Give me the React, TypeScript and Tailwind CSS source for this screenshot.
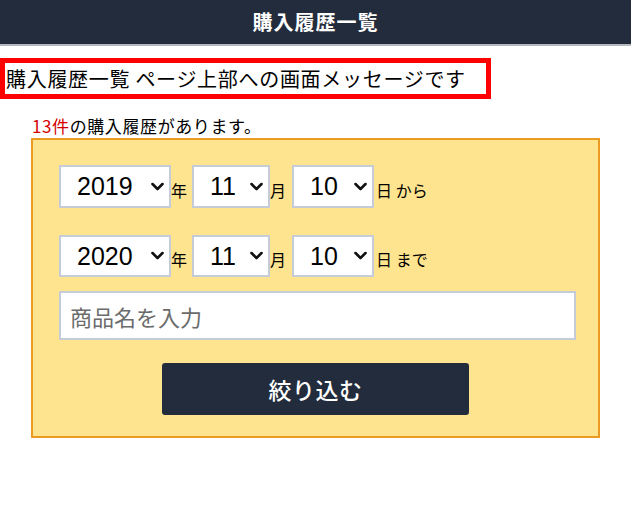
import React from "react";

const Chevron = () => (
  <svg
    className="pointer-events-none absolute right-[7px] top-1/2 -translate-y-1/2"
    width="13"
    height="9"
    viewBox="0 0 13 9"
  >
    <path d="M1.5 1.5 L6.5 6.5 L11.5 1.5" fill="none" stroke="#111" strokeWidth="2.6" strokeLinecap="round" strokeLinejoin="round" />
  </svg>
);

function Sel({ value, w, h }: { value: string; w: string; h: string }) {
  return (
    <div className={`relative ${w}`}>
      <select
        defaultValue={value}
        className={`w-full ${h} appearance-none rounded-none border-2 border-[#c6ccd7] bg-white pl-[16px] text-[25px] leading-none text-black outline-none`}
        style={{ fontFamily: "'Liberation Sans', 'Noto Sans CJK JP', sans-serif" }}
      >
        <option value={value}>{value}</option>
      </select>
      <Chevron />
    </div>
  );
}

function Row({ y, suffix, h }: { y: string; suffix: string; h: string }) {
  return (
    <div className="flex items-end">
      <Sel value={y} w="w-[112px]" h={h} />
      <span className="mb-[10px] text-[16px] leading-none">年</span>
      <div className="ml-[5px]">
        <Sel value="11" w="w-[78px]" h={h} />
      </div>
      <span className="mb-[10px] text-[16px] leading-none">月</span>
      <div className="ml-[6px]">
        <Sel value="10" w="w-[82px]" h={h} />
      </div>
      <span className="mb-[10px] ml-[2px] text-[16px] leading-none">日 {suffix}</span>
    </div>
  );
}

export default function App() {
  return (
    <div
      className="min-h-[515px] w-[631px] bg-white text-black"
      style={{ fontFamily: "'Noto Sans CJK JP', 'Noto Sans', sans-serif" }}
    >
      <header className="flex h-[46px] items-center justify-center border-b-2 border-[#b4b8bd] bg-[#222c3d]">
        <h1 className="text-[20px] font-bold tracking-[1px] text-white">購入履歴一覧</h1>
      </header>

      <div className="mt-[12px] flex h-[41px] w-[491px] items-center border-[5px] border-[#ff0000] pl-[1px] text-[20px] leading-none tracking-[0.7px]">
        購入履歴一覧 ページ上部への画面メッセージです
      </div>

      <p className="ml-[32px] mt-[15px] h-[24px] text-[17px] leading-[24px] tracking-[0.6px]">
        <span className="text-[#d40000]">13件</span>の購入履歴があります。
      </p>

      <div className="ml-[31px] w-[569px] border-2 border-[#ec9a22] bg-[#fee48f] pb-[21px] pl-[26px] pr-[22px] pt-[25px]">
        <Row y="2019" suffix="から" h="h-[43px]" />
        <div className="mt-[27px]">
          <Row y="2020" suffix="まで" h="h-[42px]" />
        </div>
        <input
          placeholder="商品名を入力"
          className="mt-[14px] h-[49px] w-[517px] border-2 border-[#c6ccd7] bg-white pl-[9px] pr-[10px] text-[22px] text-black outline-none placeholder:text-[#6b6b6b]"
        />
        <div className="mt-[23px] flex justify-center pr-[4px]">
          <button className="h-[52px] w-[307px] rounded-[3px] bg-[#222c3d] text-[23px] font-medium tracking-[0.5px] text-white">
            絞り込む
          </button>
        </div>
      </div>
    </div>
  );
}
